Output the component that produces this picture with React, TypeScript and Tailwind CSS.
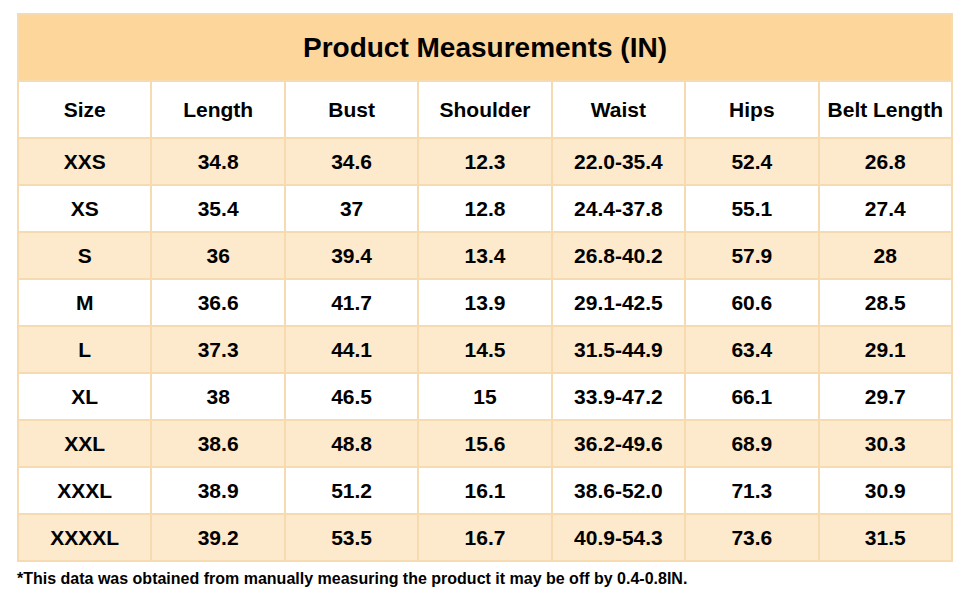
const headers = ["Size", "Length", "Bust", "Shoulder", "Waist", "Hips", "Belt Length"];

const rows = [
  ["XXS", "34.8", "34.6", "12.3", "22.0-35.4", "52.4", "26.8"],
  ["XS", "35.4", "37", "12.8", "24.4-37.8", "55.1", "27.4"],
  ["S", "36", "39.4", "13.4", "26.8-40.2", "57.9", "28"],
  ["M", "36.6", "41.7", "13.9", "29.1-42.5", "60.6", "28.5"],
  ["L", "37.3", "44.1", "14.5", "31.5-44.9", "63.4", "29.1"],
  ["XL", "38", "46.5", "15", "33.9-47.2", "66.1", "29.7"],
  ["XXL", "38.6", "48.8", "15.6", "36.2-49.6", "68.9", "30.3"],
  ["XXXL", "38.9", "51.2", "16.1", "38.6-52.0", "71.3", "30.9"],
  ["XXXXL", "39.2", "53.5", "16.7", "40.9-54.3", "73.6", "31.5"],
];

export default function App() {
  return (
    <div
      className="h-[600px] w-[970px] bg-white pl-[17px] pt-[13px] text-black"
      style={{ fontFamily: '"Liberation Sans", Arial, sans-serif' }}
    >
      <div className="w-[936px] border-2 border-[#f6dab0] bg-[#f6dab0]">
        <div className="flex h-[65px] items-center justify-center bg-[#fdd69c] text-[28px] font-bold">
          Product Measurements (IN)
        </div>
        <div className="grid grid-cols-7 gap-[2px] pt-[2px]">
          {headers.map((h) => (
            <div key={h} className="flex h-[55px] items-center justify-center bg-white text-[21px] font-bold">
              {h}
            </div>
          ))}
          {rows.map((r, i) =>
            r.map((c, j) => (
              <div
                key={`${i}-${j}`}
                className={`flex h-[45px] items-center justify-center text-[21px] font-bold ${
                  i % 2 === 0 ? "bg-[#fde9cc]" : "bg-white"
                }`}
              >
                {c}
              </div>
            ))
          )}
        </div>
      </div>
      <p className="mt-[7px] text-[16px] font-bold leading-[20px]">
        *This data was obtained from manually measuring the product it may be off by 0.4-0.8IN.
      </p>
    </div>
  );
}
